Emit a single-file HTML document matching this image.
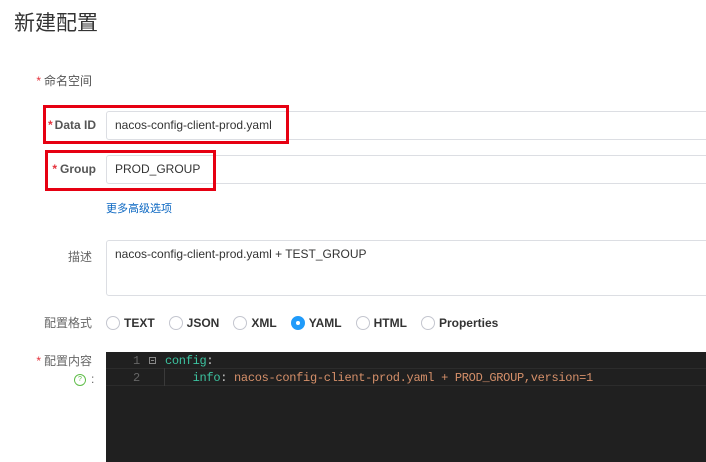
<!DOCTYPE html>
<html><head><meta charset="utf-8"><style>
body{margin:0;width:706px;height:457px;background:#fff;position:relative;overflow:hidden;font-family:"Liberation Sans","Noto Sans CJK SC",sans-serif;color:#333}
.a{position:absolute}
.lbl{position:absolute;right:614px;font-size:12px;color:#666;text-align:right;white-space:nowrap}
.st{color:#e5323c;margin-right:3px}
.inp{position:absolute;left:106px;right:-5px;border:1px solid #dcdee3;border-radius:3px;font-size:12px;color:#333;padding-left:8px;box-sizing:border-box}
.red{position:absolute;border:3px solid #e60012;box-sizing:border-box}
.r{display:inline-block;width:14px;height:14px;border:1px solid #c4c6cf;border-radius:50%;vertical-align:-3px;margin-right:4px;box-sizing:border-box}
.ro{font-size:12px;font-weight:bold;color:#333;margin-right:14px}
.code{font-family:"Liberation Mono","DejaVu Sans Mono",monospace;font-size:12px;letter-spacing:-0.3px}
</style></head><body>
<div class="a" style="left:14px;top:7px;font-size:21px;color:#333">新建配置</div>
<div class="lbl" style="top:72px;color:#555"><span class="st">*</span>命名空间</div>
<div class="inp" style="top:111px;height:29px;line-height:27px">nacos-config-client-prod.yaml</div>
<div class="inp" style="top:155px;height:29px;line-height:27px">PROD_GROUP</div>
<div class="lbl" style="top:118px;right:610px;font-weight:bold;color:#555"><span class="st" style="margin-right:2px">*</span>Data ID</div>
<div class="lbl" style="top:162px;right:610px;font-weight:bold;color:#555"><span class="st">*</span>Group</div>
<div class="red" style="left:43px;top:105px;width:246px;height:39px"></div>
<div class="red" style="left:45px;top:150px;width:171px;height:41px"></div>
<div class="a" style="left:106px;top:200px;font-size:11px;color:#0b67c2">更多高级选项</div>
<div class="lbl" style="top:248px">描述</div>
<div class="inp" style="top:240px;height:56px;padding-top:5px;line-height:16px">nacos-config-client-prod.yaml + TEST_GROUP</div>
<div class="lbl" style="top:314px">配置格式</div>
<div class="a" style="left:106px;top:314px;white-space:nowrap">
<span class="r"></span><span class="ro">TEXT</span><span class="r"></span><span class="ro">JSON</span><span class="r"></span><span class="ro">XML</span><span class="r" style="background:#209bfa;border-color:#209bfa;position:relative"><span style="position:absolute;left:4px;top:4px;width:4px;height:4px;background:#fff;border-radius:50%"></span></span><span class="ro">YAML</span><span class="r"></span><span class="ro">HTML</span><span class="r"></span><span class="ro">Properties</span></div>
<div class="lbl" style="top:352px"><span class="st">*</span>配置内容</div>
<div class="a" style="left:74px;top:374px;width:10px;height:10px;border:1px solid #5fbd49;border-radius:50%;font-size:7px;color:#5fbd49;text-align:center;line-height:10px">?</div>
<div class="a" style="left:91px;top:372px;font-size:12px;color:#666">:</div>
<div class="a" style="left:106px;top:352px;width:610px;height:110px;background:#202020"></div>
<div class="a" style="left:106px;top:368px;width:610px;height:18px;border-top:1px solid #2c2c2c;border-bottom:1px solid #2c2c2c;box-sizing:border-box"></div>
<div class="a" style="left:164px;top:368px;width:1px;height:18px;background:#3a3a3a"></div>
<div class="a code" style="left:133px;top:353px;color:#666;line-height:17px">1<br>2</div>
<div class="a" style="left:149px;top:357px;width:7px;height:7px;border:1px solid #888;box-sizing:border-box"><div style="margin:2px 1px;height:1px;background:#888"></div></div>
<div class="a code" style="left:165px;top:353px;line-height:17px;white-space:pre"><span style="color:#3cc3a0">config</span><span style="color:#ccc">:</span>
    <span style="color:#3cc3a0">info</span><span style="color:#ccc">:</span> <span style="color:#d6906a">nacos-config-client-prod.yaml + PROD_GROUP,version=1</span></div>
</body></html>
